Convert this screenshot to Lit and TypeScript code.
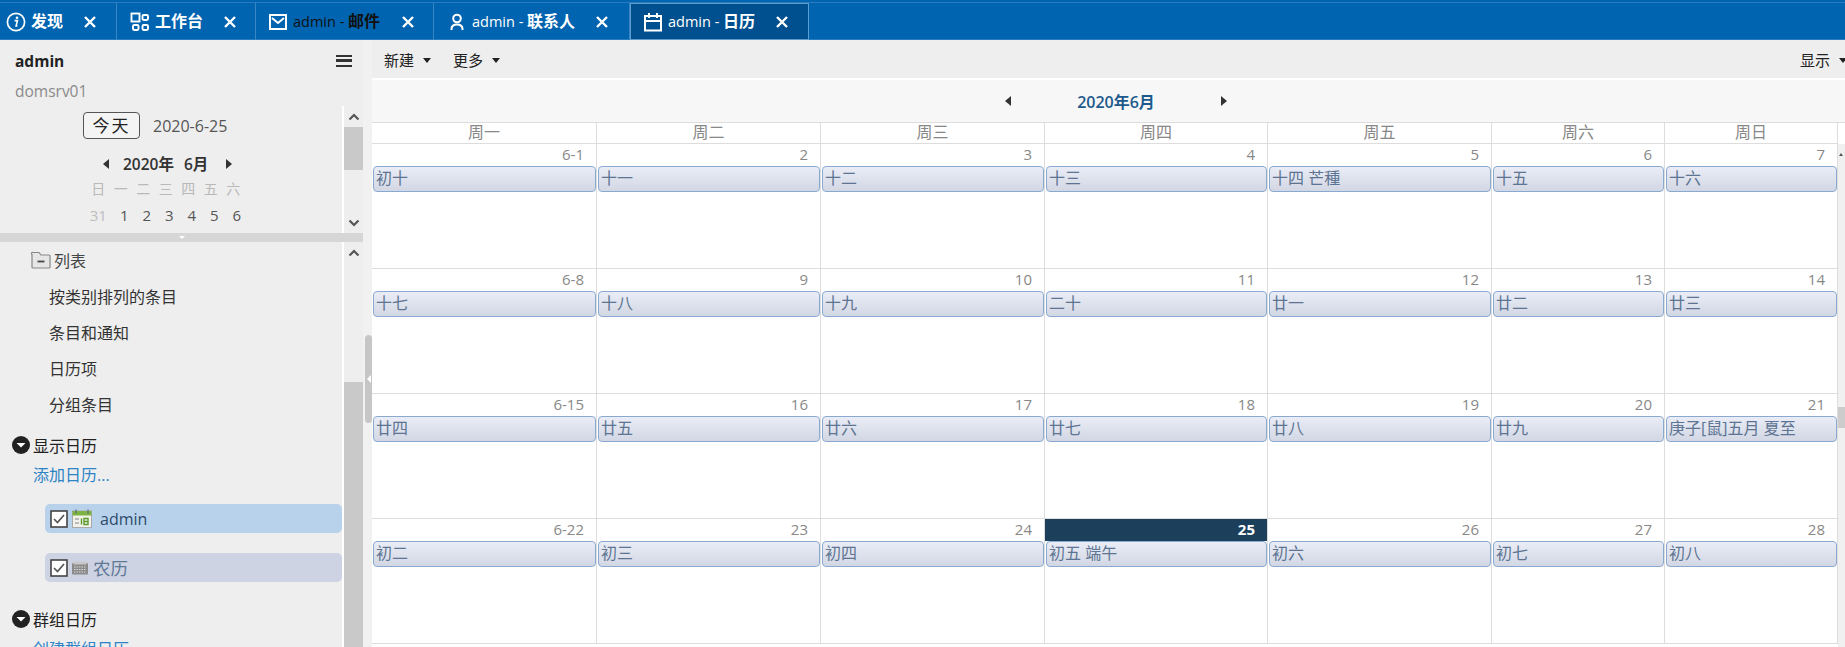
import { LitElement, html, css, svg } from "lit";
import { customElement } from "lit/decorators.js";

const tabIcons: Record<string, unknown> = {
  info: svg`<svg width="20" height="20" viewBox="0 0 20 20"><circle cx="10" cy="10" r="8.6" fill="none" stroke="#fff" stroke-width="1.7"/><circle cx="11" cy="5.8" r="1.3" fill="#fff"/><path d="M8.6 8.6h2.8l-1.3 5.4h1.3" fill="none" stroke="#fff" stroke-width="1.6"/></svg>`,
  work: svg`<svg width="20" height="20" viewBox="0 0 20 20" fill="none" stroke="#fff" stroke-width="1.9"><rect x="1.5" y="1.5" width="8" height="8"/><rect x="12.5" y="3" width="5.5" height="5" rx="1.2"/><rect x="3" y="13" width="5.5" height="5" rx="1.2"/><rect x="12.5" y="13" width="5.5" height="5" rx="1.2"/></svg>`,
  mail: svg`<svg width="20" height="20" viewBox="0 0 20 20" fill="none" stroke="#fff" stroke-width="2"><rect x="2" y="3" width="16" height="14"/><path d="M4 6l6 5 6-5"/></svg>`,
  user: svg`<svg width="20" height="20" viewBox="0 0 20 20" fill="none" stroke="#fff" stroke-width="2"><circle cx="10" cy="6.500" r="3.800"/><path d="M4.500 18v-1c0-3 2.500-4.500 5.500-4.500s5.500 1.500 5.500 4.500v1"/></svg>`,
  cal: svg`<svg width="20" height="20" viewBox="0 0 20 20" fill="none" stroke="#fff" stroke-width="2"><rect x="2" y="4" width="16" height="14.500"/><path d="M2 9h16M6 1v5M14 1v5"/></svg>`,
};

const tabs = [
  { icon: "info", prefix: "", label: "发现", width: 117, pad: 6, gap: 21 },
  { icon: "work", prefix: "", label: "工作台", width: 139, pad: 13, gap: 21 },
  { icon: "mail", prefix: "admin - ", label: "邮件", width: 178, pad: 12, gap: 22, dark: true },
  { icon: "user", prefix: "admin - ", label: "联系人", width: 196, pad: 13, gap: 21 },
  { icon: "cal", prefix: "admin - ", label: "日历", width: 179, pad: 12, gap: 21, active: true },
];

const weekdays = ["周一", "周二", "周三", "周四", "周五", "周六", "周日"];

const rows = [
  [["6-1", "初十"], ["2", "十一"], ["3", "十二"], ["4", "十三"], ["5", "十四 芒種"], ["6", "十五"], ["7", "十六"]],
  [["6-8", "十七"], ["9", "十八"], ["10", "十九"], ["11", "二十"], ["12", "廿一"], ["13", "廿二"], ["14", "廿三"]],
  [["6-15", "廿四"], ["16", "廿五"], ["17", "廿六"], ["18", "廿七"], ["19", "廿八"], ["20", "廿九"], ["21", "庚子[鼠]五月 夏至"]],
  [["6-22", "初二"], ["23", "初三"], ["24", "初四"], ["25", "初五 端午"], ["26", "初六"], ["27", "初七"], ["28", "初八"]],
];

const chevUp = svg`<svg width="12" height="8" viewBox="0 0 12 8" fill="none" stroke="#555" stroke-width="2.200"><path d="M1.500 6.500L6 2l4.500 4.500"/></svg>`;
const chevDown = svg`<svg width="12" height="8" viewBox="0 0 12 8" fill="none" stroke="#555" stroke-width="2.200"><path d="M1.500 1.500L6 6l4.500-4.500"/></svg>`;
const circleDown = svg`<svg width="18" height="18" viewBox="0 0 18 18"><circle cx="9" cy="9" r="9" fill="#222"/><path d="M4.500 7h9L9 11.500z" fill="#fff"/></svg>`;
const check = svg`<svg width="18" height="18" viewBox="0 0 18 18"><rect x="1" y="1" width="16" height="16" fill="#fff" stroke="#444" stroke-width="1.600"/><path d="M4 9l3.500 3.500L14 5" fill="none" stroke="#555" stroke-width="1.700"/></svg>`;

@customElement("app-root")
export class AppRoot extends LitElement {
  static styles = css`
    :host {
      display: block;
      width: 1845px;
      height: 647px;
      overflow: hidden;
      background: #fff;
      font-family: "Open Sans", "Noto Sans CJK SC", sans-serif;
      font-size: 16px;
      color: #222;
    }
    * { box-sizing: border-box; }
    svg { display: block; flex: none; }

    .tabbar {
      height: 40px;
      background: #0064b0;
      padding-top: 2px;
      display: flex;
      border-bottom: 1px solid #2a7cc0;
    }
    .tabs-line { display: flex; height: 38px; width: 100%; border-top: 1px solid #2a7cc0; }
    .tab {
      display: flex;
      align-items: center;
      color: #fff;
      font-weight: 600;
      font-size: 16px;
      border-right: 1px solid #3a86c4;
      white-space: nowrap;
      line-height: 20px;
    }
    .tab.dark .tl { color: #111; }
    .tab.active { background: #00508f; border: 1px solid #5d9ccf; }
    .tl { margin-left: 5px; }
    .pre { font-size: 14.500px; font-weight: 400; white-space: pre; }

    .body { display: flex; height: 607px; }

    .side { width: 372px; display: flex; background: #f0f0f0; flex: none; }
    .side-main { width: 363px; display: flex; flex-direction: column; background: #eee; }
    .gutter { width: 9px; padding: 295px 1px 0 2px; background: #f1f1f1; position: relative; }
    .grip { height: 88px; width: 7px; background: #c6c6c6; border-radius: 4px; }
    .notch { position: absolute; left: 4px; top: 335px; width: 0; height: 0; border: 4px solid transparent; border-left: 0; border-right: 4px solid #fff; }

    .head { height: 66px; padding: 10px 11px 0 15px; }
    .head-top { display: flex; align-items: center; justify-content: space-between; height: 22px; }
    .uname { font-weight: 700; font-size: 15.500px; color: #222; }
    .menu { width: 16px; height: 12px; border-top: 2.500px solid #333; border-bottom: 2.500px solid #333; }
    .menu-mid { height: 2.500px; background: #333; margin-top: 2.300px; }
    .server { color: #8a8a8a; font-size: 15.500px; margin-top: 9px; line-height: 20px; }

    .mini { height: 127px; display: flex; }
    .mini-main { width: 342px; }
    .scroll { width: 21px; border-left: 2px solid #fff; display: flex; flex-direction: column; align-items: center; }
    .scroll .arrow { height: 21px; display: flex; align-items: center; justify-content: center; width: 100%; }
    .thumb { background: #c9c9c9; width: 19px; }
    .mini .thumb { height: 43px; }
    .spacer { flex: 1; }

    .today-row { display: flex; align-items: center; padding: 6px 0 0 83px; height: 33px; }
    .today-btn { width: 57px; height: 27px; border: 1px solid #555; border-radius: 4px; text-align: center; line-height: 25px; font-size: 17px; letter-spacing: 2px; color: #222; background: #f4f4f4; }
    .today-date { margin-left: 13px; font-size: 16px; color: #555; }
    .month-row { display: flex; align-items: center; padding: 12px 0 0 103px; height: 37px; font-size: 15.500px; font-weight: 600; color: #333; }
    .month-row .y { margin-left: 14px; }
    .month-row .m { margin-left: 10px; }
    .month-row .next { margin-left: 18px; }
    .tri-l { width: 0; height: 0; border: 5px solid transparent; border-left: 0; border-right: 6px solid #333; }
    .tri-r { width: 0; height: 0; border: 5px solid transparent; border-right: 0; border-left: 6px solid #333; }
    .mini-grid { display: grid; grid-template-columns: repeat(7, 22.500px); padding-left: 87px; text-align: center; font-size: 14px; line-height: 26px; }
    .wk { color: #b9b9b9; height: 26px; }
    .dd { color: #555; padding-left: 7px; height: 26px; font-size: 15px; }
    .dd.off { color: #bdbdbd; padding-left: 0; }

    .split { height: 9px; background: #d6d6d6; display: flex; justify-content: center; }
    .split i { width: 0; height: 0; border: 3.500px solid transparent; border-top: 3px solid #fff; border-bottom: 0; margin-top: 3px; }

    .lower { flex: 1; display: flex; min-height: 0; }
    .tree { width: 342px; overflow: hidden; }
    .lower .thumb { flex: 1; margin-top: 119px; }
    .folder { display: flex; align-items: center; height: 36px; padding-left: 31px; color: #444; }
    .folder span { margin-left: 3px; }
    .item { height: 36px; line-height: 36px; padding-left: 49px; color: #333; }
    .items { margin-top: 1px; }
    .sect { display: flex; align-items: center; height: 31px; padding-left: 12px; margin-top: 6px; color: #222; }
    .sect span { margin-left: 3px; }
    .sect.group { margin-top: 21px; }
    .link { color: #2d83c6; padding-left: 33px; line-height: 30px; height: 30px; white-space: nowrap; }
    .chip { margin-left: 45px; height: 29px; width: 297px; border-radius: 5px; display: flex; align-items: center; padding-left: 5px; }
    .chip.a { background: #b8d2ec; margin-top: 14px; color: #2f4a6a; }
    .chip.b { background: #cdd3e2; margin-top: 20px; color: #5f7896; }
    .chip .ci { margin-left: 4px; }
    .chip .ct { margin-left: 8px; }
    .chip.b .ct { margin-left: 5px; font-size: 17.500px; }

    .main { flex: 1; min-width: 0; display: flex; flex-direction: column; }
    .toolbar { height: 38px; background: #eee; display: flex; align-items: center; padding-left: 12px; color: #222; font-size: 15px; flex: none; }
    .tool { display: flex; align-items: center; }
    .tool i { width: 0; height: 0; border: 4px solid transparent; border-top: 5px solid #222; border-bottom: 0; margin: 2px 0 0 9px; }
    .tool + .tool { margin-left: 22px; }
    .tool.right { margin-left: auto; margin-right: -2px; }
    .gap { height: 2px; background: #fff; flex: none; }
    .mhead { height: 43px; background: #f7f7f7; border-bottom: 1px solid #ddd; display: flex; align-items: center; justify-content: center; flex: none; padding-left: 15px; }
    .mhead .ttl { font-weight: 600; font-size: 16px; color: #1d5a8c; margin: 0 66px; }
    .cal { flex: 1; display: flex; min-height: 0; }
    .cal-main { width: 1466px; }
    .cols { display: grid; grid-template-columns: 225px 224px 224px 223px 224px 173px 173px; }
    .wd { height: 21px; line-height: 19px; text-align: center; color: #888; border-right: 1px solid #ddd; border-bottom: 1px solid #ddd; font-size: 16px; }
    .cell { height: 125px; border-right: 1px solid #ddd; border-bottom: 1px solid #ddd; }
    .num { height: 22px; line-height: 21px; text-align: right; padding-right: 12px; color: #888; font-size: 15px; }
    .num.today { background: #1c3f5c; color: #fff; font-weight: 700; }
    .ev {
      height: 26px;
      margin-left: 1px;
      border: 1.500px solid #8aa9d0;
      border-radius: 4px;
      background: linear-gradient(#eaedf6, #d2d7e4);
      color: #5d7492;
      line-height: 23px;
      padding-left: 2px;
      font-size: 16px;
      white-space: nowrap;
      overflow: hidden;
    }
    .rail { width: 7px; background: #f0f0f0; display: flex; flex-direction: column; }
    .rail-top { height: 21px; background: #fff; flex: none; }
    .rail-up { width: 0; height: 0; border: 2.500px solid transparent; border-top: 0; border-bottom: 3px solid #555; margin: 9px 0 0 1px; flex: none; }
    .rail-thumb { height: 21px; background: #ccc; margin-top: 251px; flex: none; }
  `;

  private miniGrid() {
    return html`<div class="mini-grid">
      ${["日", "一", "二", "三", "四", "五", "六"].map((d) => html`<div class="wk">${d}</div>`)}
      ${["31", "1", "2", "3", "4", "5", "6"].map((d) => html`<div class="dd ${d === "31" ? "off" : ""}">${d}</div>`)}
    </div>`;
  }

  render() {
    return html`
      <div class="tabbar">
        <div class="tabs-line">
          ${tabs.map(
            (t) => html`<div
              class="tab ${t.dark ? "dark" : ""} ${t.active ? "active" : ""}"
              style="width:${t.width}px;padding-left:${t.pad}px"
            >
              ${tabIcons[t.icon]}
              <span class="tl"><span class="pre">${t.prefix}</span>${t.label}</span>
              <svg style="margin-left:${t.gap}px" width="12" height="12" viewBox="0 0 12 12" stroke="#fff" stroke-width="2.400"><path d="M1 1l10 10M11 1L1 11"/></svg>
            </div>`
          )}
        </div>
      </div>
      <div class="body">
        <aside class="side">
          <div class="side-main">
            <div class="head">
              <div class="head-top">
                <span class="uname">admin</span>
                <div class="menu"><div class="menu-mid"></div></div>
              </div>
              <div class="server">domsrv01</div>
            </div>
            <div class="mini">
              <div class="mini-main">
                <div class="today-row">
                  <div class="today-btn">今天</div>
                  <div class="today-date">2020-6-25</div>
                </div>
                <div class="month-row">
                  <i class="tri-l"></i><span class="y">2020年</span><span class="m">6月</span><i class="tri-r next"></i>
                </div>
                ${this.miniGrid()}
              </div>
              <div class="scroll">
                <div class="arrow">${chevUp}</div>
                <div class="thumb"></div>
                <div class="spacer"></div>
                <div class="arrow">${chevDown}</div>
              </div>
            </div>
            <div class="split"><i></i></div>
            <div class="lower">
              <div class="tree">
                <div class="folder">
                  <svg width="20" height="18" viewBox="0 0 20 18"><path d="M1 3.500V16a1 1 0 0 0 1 1h16a1 1 0 0 0 1-1V5a1 1 0 0 0-1-1h-8L8 1.500H2A1 1 0 0 0 1 3.500z" fill="#e6e6e6" stroke="#888" stroke-width="1.200"/><path d="M6.500 10.500h7" stroke="#444" stroke-width="1.800"/></svg>
                  <span>列表</span>
                </div>
                <div class="items">
                  <div class="item">按类别排列的条目</div>
                  <div class="item">条目和通知</div>
                  <div class="item">日历项</div>
                  <div class="item">分组条目</div>
                </div>
                <div class="sect">${circleDown}<span>显示日历</span></div>
                <div class="link">添加日历...</div>
                <div class="chip a">
                  ${check}
                  <svg class="ci" width="20" height="19" viewBox="0 0 20 19"><rect x="0.500" y="2" width="19" height="16.500" fill="#f2f2ea" stroke="#aaa"/><rect x="0.500" y="2" width="19" height="4.500" fill="#7cb342"/><path d="M4 0.500v4M16 0.500v4" stroke="#668" stroke-width="1.200"/><rect x="3" y="9" width="4" height="2" fill="#bbb"/><rect x="3" y="13" width="4" height="2" fill="#bbb"/><path d="M9.500 9.500v6M12 9.500h4v6h-4zM12 12.500h4" fill="none" stroke="#5c9a2e" stroke-width="1.400"/></svg>
                  <span class="ct">admin</span>
                </div>
                <div class="chip b">
                  ${check}
                  <svg class="ci" width="16" height="14" viewBox="0 0 16 14"><rect x="0" y="2" width="16" height="11.500" rx="1" fill="#8b8b8b"/><rect x="1.500" y="0.500" width="13" height="3" fill="#c8c8c8"/><path d="M2 6h12M2 8.500h12M2 11h12" stroke="#d8d8d8" stroke-width="1" stroke-dasharray="1.500 1"/></svg>
                  <span class="ct">农历</span>
                </div>
                <div class="sect group">${circleDown}<span>群组日历</span></div>
                <div class="link">创建群组日历</div>
              </div>
              <div class="scroll">
                <div class="arrow">${chevUp}</div>
                <div class="thumb"></div>
              </div>
            </div>
          </div>
          <div class="gutter"><div class="grip"></div><div class="notch"></div></div>
        </aside>
        <main class="main">
          <div class="toolbar">
            <div class="tool">新建<i></i></div>
            <div class="tool">更多<i></i></div>
            <div class="tool right">显示<i></i></div>
          </div>
          <div class="gap"></div>
          <div class="mhead"><i class="tri-l"></i><span class="ttl">2020年6月</span><i class="tri-r"></i></div>
          <div class="cal">
            <div class="cal-main">
              <div class="cols">${weekdays.map((w) => html`<div class="wd">${w}</div>`)}</div>
              ${rows.map(
                (r) => html`<div class="cols">
                  ${r.map(
                    ([n, e]) => html`<div class="cell">
                      <div class="num ${n === "25" ? "today" : ""}">${n}</div>
                      <div class="ev">${e}</div>
                    </div>`
                  )}
                </div>`
              )}
            </div>
            <div class="rail"><div class="rail-top"></div><div class="rail-up"></div><div class="rail-thumb"></div></div>
          </div>
        </main>
      </div>
    `;
  }
}
